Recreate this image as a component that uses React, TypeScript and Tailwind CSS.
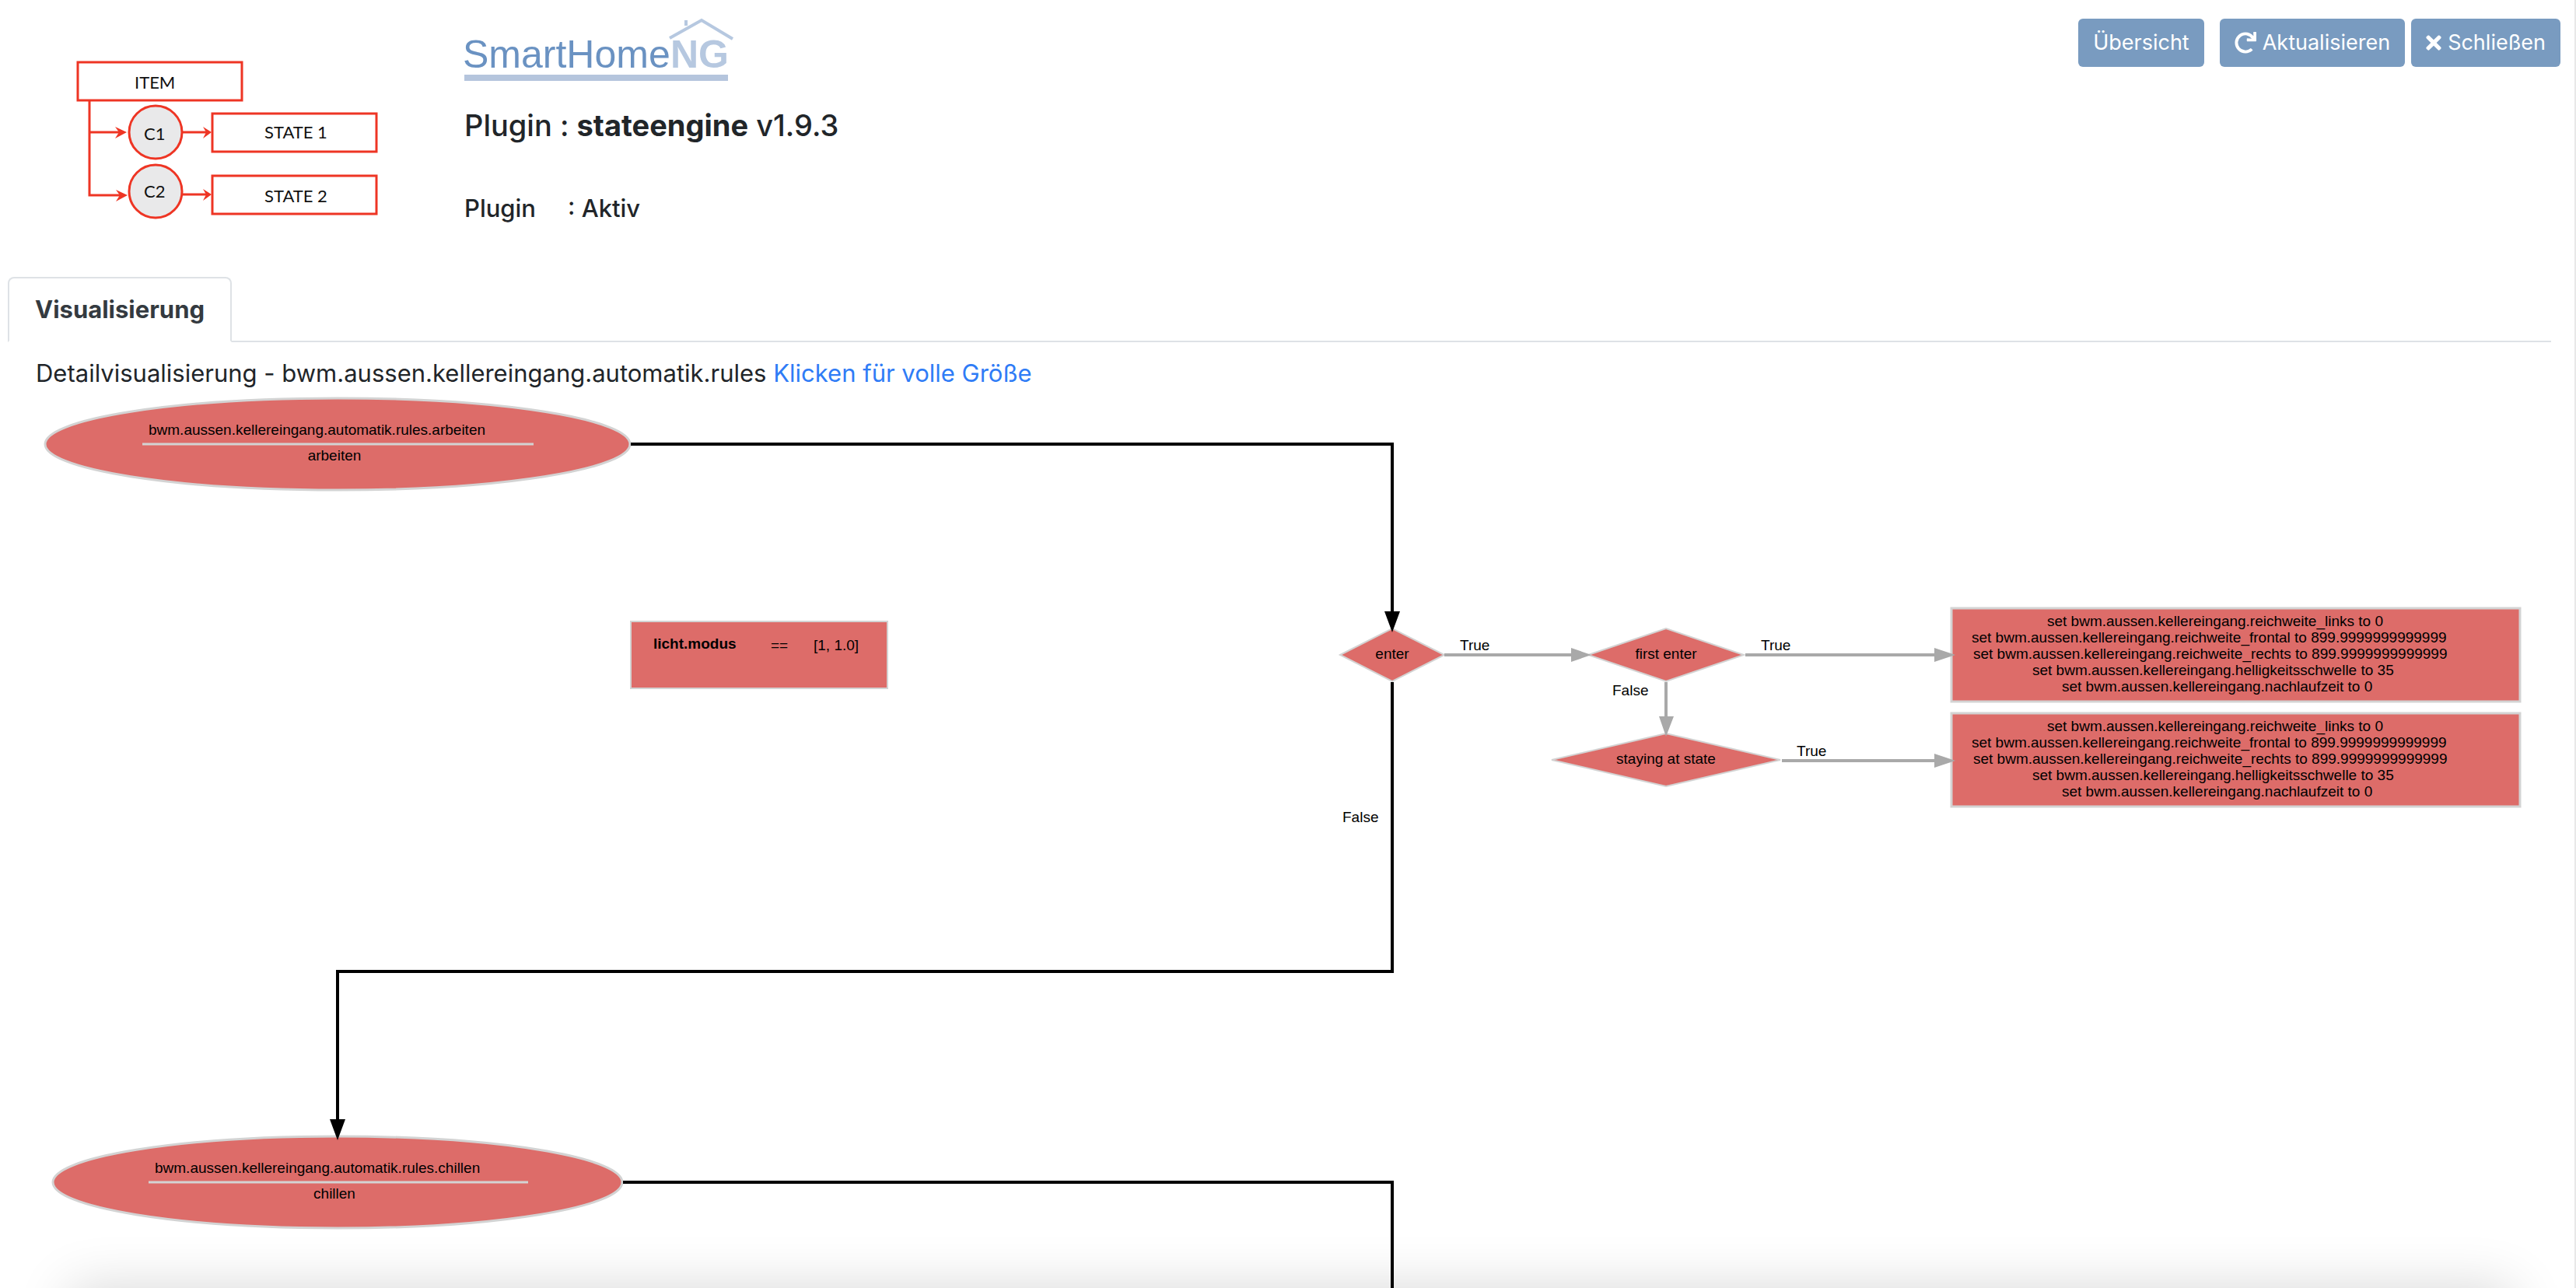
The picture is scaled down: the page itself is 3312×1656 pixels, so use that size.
import React from "react";
import { FaRedo, FaTimes } from "react-icons/fa";

const RED = "#dd6c69";
const EDGE = "#a9a9a9";
const OUTLINE = "#d3d3d3";

function StateEngineLogo() {
  return (
    <svg viewBox="60 40 480 280" className="block h-[280px] w-[480px] shrink-0" role="img" aria-label="ITEM STATE">
      <g fill="none" stroke="#ee3524" strokeWidth="3">
        <rect x="100" y="80" width="211" height="49" />
        <rect x="273" y="146" width="211" height="49" />
        <rect x="273" y="226" width="211" height="49" />
        <path d="M115 130V251H154M115 170H154M234 170H266M234 250H266" />
        <circle cx="200" cy="170" r="34" fill="#e9e9ea" />
        <circle cx="200" cy="246" r="34" fill="#e9e9ea" />
      </g>
      <g fill="#ee3524">
        <path d="M163 170L148 163L153 170L148 178Z" />
        <path d="M164 251L149 244L154 251L149 259Z" />
        <path d="M272 170L261 163L265 170L261 178Z" />
        <path d="M272 250L261 243L265 250L261 258Z" />
      </g>
      <g fill="#111" fontFamily="Lato, sans-serif" fontSize="22">
        <text x="173" y="114">ITEM</text>
        <text x="185" y="180">C1</text>
        <text x="185" y="254">C2</text>
        <text x="340" y="178">STATE 1</text>
        <text x="340" y="260">STATE 2</text>
      </g>
    </svg>
  );
}

function SmartHomeLogo() {
  return (
    <svg viewBox="587 14 366 90" className="-ml-2.5 block h-[90px] w-[366px]" role="img" aria-label="SmartHomeNG">
      <g fontFamily="'Liberation Sans', Arial, sans-serif" fontSize="50">
        <text x="595" y="87" fill="#6a92c2">SmartHome</text>
        <text x="862" y="87" fill="#b6c8e0" fontWeight="bold">NG</text>
      </g>
      <path d="M861 49L902 26L942 50M882 26V33" fill="none" stroke="#b6c8e0" strokeWidth="4" />
      <rect x="597" y="96" width="339" height="8" fill="#b5c5dd" />
    </svg>
  );
}

function ActionButton({ children }: { children: React.ReactNode }) {
  return (
    <button type="button" className="flex h-[62px] items-center gap-2 rounded-md bg-[#799bc0] px-[19px] text-[27px] text-white">
      {children}
    </button>
  );
}

function Diamond({ cx, cy, rx, label }: { cx: number; cy: number; rx: number; label: string }) {
  return (
    <g>
      <path d={`M${cx - rx} ${cy}L${cx} ${cy - 34}L${cx + rx} ${cy}L${cx} ${cy + 34}Z`} fill={RED} stroke={OUTLINE} strokeWidth="2" />
      <text x={cx} y={cy + 5} textAnchor="middle">{label}</text>
    </g>
  );
}

function StateNode({ cy, rx, name, title, lineX }: { cy: number; rx: number; name: string; title: string; lineX: [number, number] }) {
  return (
    <g>
      <ellipse cx="434" cy={cy} rx={rx} ry="59" fill={RED} stroke={OUTLINE} strokeWidth="3" />
      <path d={`M${lineX[0]} ${cy}H${lineX[1]}`} stroke={OUTLINE} strokeWidth="3" />
      <text x={lineX[0] + 8} y={cy - 12}>{name}</text>
      <text x="430" y={cy + 21} textAnchor="middle">{title}</text>
    </g>
  );
}

const ACTIONS: [number, string][] = [
  [2632, "set bwm.aussen.kellereingang.reichweite_links to 0"],
  [2535, "set bwm.aussen.kellereingang.reichweite_frontal to 899.9999999999999"],
  [2537, "set bwm.aussen.kellereingang.reichweite_rechts to 899.9999999999999"],
  [2613, "set bwm.aussen.kellereingang.helligkeitsschwelle to 35"],
  [2651, "set bwm.aussen.kellereingang.nachlaufzeit to 0"],
];

function ActionBox({ y }: { y: number }) {
  return (
    <g>
      <rect x="2509" y={y} width="731" height="120" fill={RED} stroke={OUTLINE} strokeWidth="3" />
      {ACTIONS.map(([x, text], i) => (
        <text key={text} x={x} y={y + 23 + i * 21}>{text}</text>
      ))}
    </g>
  );
}

function StateGraph() {
  return (
    <svg viewBox="46 500 3234 1156" className="block w-full" fontFamily="'Liberation Sans', Arial, sans-serif" fontSize="19" fill="#000">
      <StateNode cy={571} rx={376} name="bwm.aussen.kellereingang.automatik.rules.arbeiten" title="arbeiten" lineX={[183, 686]} />
      <StateNode cy={1520} rx={366} name="bwm.aussen.kellereingang.automatik.rules.chillen" title="chillen" lineX={[191, 679]} />

      <rect x="811" y="799" width="330" height="86" fill={RED} stroke={OUTLINE} strokeWidth="2" />
      <text x="840" y="834" fontWeight="bold">licht.modus</text>
      <text x="991" y="836">==</text>
      <text x="1046" y="836">[1, 1.0]</text>

      <Diamond cx={1790} cy={842} rx={67} label="enter" />
      <Diamond cx={2142} cy={842} rx={100} label="first enter" />
      <Diamond cx={2142} cy={977} rx={147} label="staying at state" />
      <ActionBox y={782} />
      <ActionBox y={917} />

      <g fill="none" stroke="#000" strokeWidth="4">
        <path d="M811 571H1790V788" />
        <path d="M1790 877V1249H434V1441" />
        <path d="M801 1520H1790V1656" />
      </g>
      <path d="M1780 786H1800L1790 813ZM424 1439H444L434 1466Z" />

      <path d="M1857 842H2022M2244 842H2489M2291 978H2489M2142 877V923" fill="none" stroke={EDGE} strokeWidth="4" />
      <path d="M2020 833L2046 842L2020 851ZM2487 833L2514 842L2487 851ZM2487 969L2514 978L2487 987ZM2133 921H2152L2142 947Z" fill={EDGE} />

      <text x="1877" y="836">True</text>
      <text x="2264" y="836">True</text>
      <text x="2310" y="972">True</text>
      <text x="2073" y="894">False</text>
      <text x="1726" y="1057">False</text>
    </svg>
  );
}

export default function App() {
  return (
    <div className="relative h-screen overflow-hidden border-r-2 border-[#e8e8e8] bg-white font-['Inter',sans-serif] text-[#212529]">
      <header className="flex h-[356px] items-start pr-[18px] pl-[60px]">
        <div className="pt-10">
          <StateEngineLogo />
        </div>
        <div className="flex-1 pt-3.5 pl-[57px]">
          <SmartHomeLogo />
          <h1 className="mt-8 text-[38px] leading-[50px] font-medium">
            Plugin : <strong className="font-bold">stateengine</strong> v1.9.3
          </h1>
          <p className="mt-[62px] flex text-[31px] leading-10 font-medium">
            <span className="w-[133px]">Plugin</span>
            <span>: Aktiv</span>
          </p>
        </div>
        <div className="flex items-start gap-2 pt-6">
          <div className="mr-3">
            <ActionButton>Übersicht</ActionButton>
          </div>
          <ActionButton>
            <FaRedo className="size-7" />
            Aktualisieren
          </ActionButton>
          <ActionButton>
            <FaTimes className="h-7 w-5" />
            Schließen
          </ActionButton>
        </div>
      </header>

      <nav className="mr-[30px] ml-2.5 flex border-b-2 border-[#dee2e6]" role="tablist">
        <button
          type="button"
          role="tab"
          aria-selected="true"
          className="-mb-0.5 h-[84px] rounded-t-lg border-2 border-[#dee2e6] border-b-white bg-white px-[33px] text-[31px] font-bold text-[#343a40]"
        >
          Visualisierung
        </button>
      </nav>

      <main className="pr-[30px] pl-[46px]">
        <p className="pt-5 text-[31px] leading-10">
          Detailvisualisierung - bwm.aussen.kellereingang.automatik.rules{" "}
          <a href="#full" className="text-[#2f7cf6]">Klicken für volle Größe</a>
        </p>
        <StateGraph />
      </main>

      <div className="pointer-events-none absolute inset-x-0 bottom-0 h-24 overflow-hidden">
        <div className="absolute top-full right-20 left-[90px] h-40 shadow-[0_0_70px_rgba(0,0,0,0.16)]" />
      </div>
    </div>
  );
}
